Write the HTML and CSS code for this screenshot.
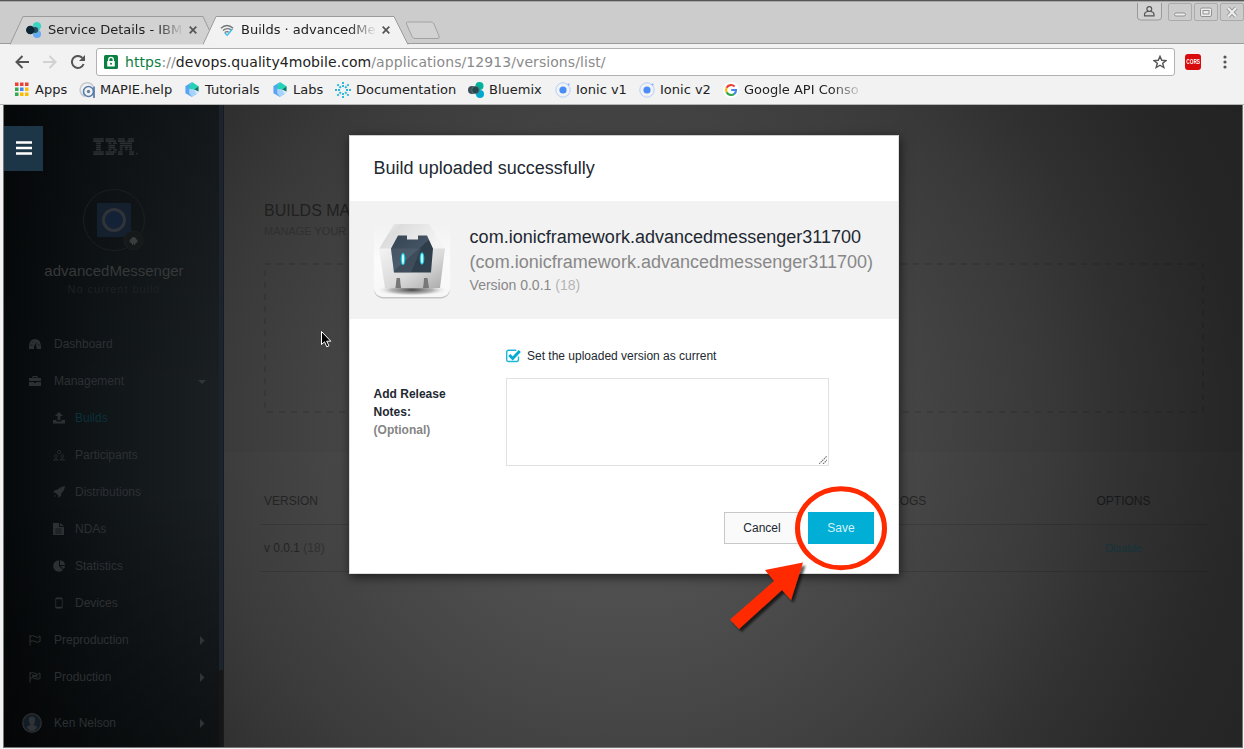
FILE: index.html
```html
<!DOCTYPE html>
<html lang="en">
<head>
<meta charset="utf-8">
<title>Builds · advancedMessenger</title>
<link rel="stylesheet" href="styles.css">
</head>
<body>
<svg width="0" height="0" class="defs">
  <defs>
    <symbol id="ionic" viewBox="0 0 16 16"><circle cx="8" cy="8" r="7.2" fill="none" stroke="#b3d0fb"/><circle cx="8" cy="8" r="3.6" fill="#4b8df8"/><circle cx="13.6" cy="2.6" r="1.1" fill="#8ab8fb"/></symbol>
    <symbol id="gem" viewBox="0 0 14 16"><path d="M7 8.500L14 10v2l-7 4z" fill="#d4e9fb"/><path d="M0 4.500L3 3 7 7v9l-7-4z" fill="#5ba3f5"/><path d="M4 7l5 1 3 5-5 3-3-4z" fill="#a5d3fb"/><path d="M7 0l7 4.500L9 8 3 7z" fill="#23d3b8"/><path d="M9 8l5-3.500V10z" fill="#087a68"/><path d="M7 0L3 7 0 4.500z" fill="#4ba9ea"/></symbol>
    <symbol id="caret" viewBox="0 0 5 9"><path d="M0 0l4.500 4.500L0 9z" fill="currentColor"/></symbol>
  </defs>
</svg>
<div class="browser">
  <header class="titlebar">
    <div class="tab tab-idle">
      <svg class="tab-shape" viewBox="0 0 207 29"><path d="M0 28.5L13 .5H193L206 28.5" fill="#d2d2d2" stroke="#9b9b9b"/></svg>
      <svg class="fav" viewBox="0 0 16 16"><circle cx="11" cy="4.2" r="4.2" fill="#36d9c0"/><circle cx="11" cy="12" r="4" fill="#65a8f8"/><circle cx="9.3" cy="8" r="3.600" fill="#1d5266" stroke="#75cbd9" stroke-width=".9"/><circle cx="4.3" cy="8" r="4.3" fill="#0d2636"/></svg>
      <span class="tab-text">Service Details - IBM</span>
      <svg class="tab-x" viewBox="0 0 8 8"><path d="M.7.7l6.6 6.6M7.3.7L.7 7.3"/></svg>
    </div>
    <div class="tab tab-active">
      <svg class="tab-shape" viewBox="0 0 207 29"><path d="M0 28.5L13 .5H191L205 28.5" fill="#f2f2f2" stroke="#9b9b9b"/><path d="M1 28.7H204" stroke="#f2f2f2"/></svg>
      <svg class="fav" viewBox="0 0 16 16"><g fill="none" stroke="#73777a" stroke-width="1.6"><path d="M1 6q7-6.500 14 0M3.300 8.600q4.700-4 9.400-.7M5.400 11q2.700-2 4.500-.5"/></g><path d="M5.500 11.500L8.200 14l6-7.200" fill="none" stroke="#40bdeb" stroke-width="1.7"/></svg>
      <span class="tab-text">Builds · advancedMe</span>
      <svg class="tab-x" viewBox="0 0 8 8"><path d="M.7.7l6.600 6.600M7.300.7L.7 7.300"/></svg>
    </div>
    <svg class="new-tab" viewBox="0 0 36 19"><path d="M2.500 1H26q2 0 3 2l5 12q1 2.500-1 2.500H10q-2 0-3-2L1.500 3Q1 1 2.500 1z" fill="#d2d2d2" stroke="#a2a2a2"/></svg>
    <div class="win-controls">
      <svg class="user-btn" viewBox="0 0 25 18"><path d="M.5 0V14q0 3 3 3h18q3 0 3-3V0" fill="#d2d2d2" stroke="#999"/><path d="M7.500 12.800V11.500q0-2.500 3-3h3.500q3 .5 3 3v1.300z" fill="none" stroke="#555" stroke-width="1.200"/><circle cx="12.300" cy="6" r="2.400" fill="#d8d8d8" stroke="#555" stroke-width="1.200"/></svg>
      <svg class="win-btn" viewBox="0 0 24 18"><rect x=".5" y=".5" width="23" height="17" rx="1.500"/><rect x="6.500" y="10" width="11" height="3" rx="1.500" class="glyph"/></svg>
      <svg class="win-btn" viewBox="0 0 24 18"><rect x=".5" y=".5" width="23" height="17" rx="1.500"/><rect x="6.500" y="5" width="11" height="8.500" rx="1.500" class="glyph"/><rect x="9" y="7.500" width="6" height="3.500" class="glyph"/></svg>
      <svg class="win-btn" viewBox="0 0 24 18"><rect x=".5" y=".5" width="23" height="17" rx="1.500"/><path d="M8 5l8 8.500M16 5l-8 8.500" stroke="#919191" stroke-width="4"/><path d="M8 5l8 8.500M16 5l-8 8.500" stroke="#eee" stroke-width="2.200"/></svg>
    </div>
  </header>
  <div class="toolbar">
    <svg class="nav-icon" viewBox="0 0 14 14"><path d="M14 7H1.500M7.500 1L1.500 7l6 6" stroke="#555"/></svg>
    <svg class="nav-icon" viewBox="0 0 14 14"><path d="M0 7h12.500M6.500 1l6 6-6 6" stroke="#d2d2d2"/></svg>
    <svg class="nav-icon" viewBox="0 0 14 14"><path d="M12.600 9A6 6 0 1 1 11.400 2.900" stroke="#555"/><path d="M14 0v6H8z" fill="#555" stroke="none"/></svg>
    <div class="omnibox">
      <svg class="lock" viewBox="0 0 14 14"><rect width="14" height="14" rx="1.500" fill="#0b8043"/><rect x="3.200" y="6" width="7.600" height="5.500" rx=".6" fill="#fff"/><path d="M4.700 6V4.700a2.300 2.300 0 0 1 4.600 0V6" fill="none" stroke="#fff" stroke-width="1.300"/><circle cx="7" cy="8.700" r="1" fill="#0b8043"/></svg>
      <span class="url"><span class="secure">https</span>://<span class="host">devops.quality4mobile.com</span>/applications/12913/versions/list/</span>
      <svg class="star" viewBox="0 0 14 14"><path d="M7 1.300l1.700 4 4.300.3-3.300 2.700 1.100 4.200L7 10.200l-3.800 2.300 1.100-4.200L1 5.600l4.300-.3z"/></svg>
    </div>
    <span class="cors"><b>CORS</b></span>
    <svg class="dots" viewBox="0 0 4 14"><circle cx="2" cy="2" r="1.600"/><circle cx="2" cy="7" r="1.600"/><circle cx="2" cy="12" r="1.600"/></svg>
  </div>
  <nav class="bookmarks">
    <a><svg class="bm" viewBox="0 0 14 14"><path fill="#ea4335" d="M0 0h3.500v3.500H0zM5 0h3.500v3.500H5zM10 0h3.500v3.500H10z"/><path fill="#34a853" d="M0 5h3.500v3.500H0zM0 10h3.500v3.500H0z"/><path fill="#4285f4" d="M5 5h3.500v3.500H5z"/><path fill="#fbbc05" d="M10 5h3.500v3.500H10zM5 10h3.500v3.500H5zM10 10h3.500v3.500H10z"/></svg>Apps</a>
    <a><svg class="bm wide" viewBox="0 0 16 16"><path d="M6 14.500A7 7 0 1 1 14 4" fill="none" stroke="#c5c9ce" stroke-width="1.500"/><circle cx="9.500" cy="9.500" r="5" fill="#f2f2f2" stroke="#567aaa" stroke-width="1.600"/><path d="M15 4.500V16" stroke="#567aaa" stroke-width="1.700"/><circle cx="9.500" cy="9.500" r="1.700" fill="#67849e"/></svg>MAPIE.help</a>
    <a><svg class="bm"><use href="#gem"/></svg>Tutorials</a>
    <a><svg class="bm"><use href="#gem"/></svg>Labs</a>
    <a><svg class="bm wide" viewBox="0 0 16 16"><g fill="none" stroke="#28b4dc" stroke-width="1.900" stroke-dasharray="2 1"><path d="M8 5V0M8 11v5M5 8H0M11 8h5M5.900 5.900L2.300 2.300M10.100 10.100l3.600 3.600M5.900 10.100l-3.600 3.600M10.100 5.900l3.600-3.600"/></g></svg>Documentation</a>
    <a><svg class="bm wide" viewBox="0 0 16 16"><circle cx="11.500" cy="4" r="4" fill="#00b39b"/><circle cx="12" cy="12" r="4" fill="#00a9ce"/><circle cx="4" cy="8" r="4" fill="#3e4f58"/><circle cx="7.500" cy="8" r="3.800" fill="#24494f" stroke="#5d8088" stroke-width=".8"/></svg>Bluemix</a>
    <a><svg class="bm wide"><use href="#ionic"/></svg>Ionic v1</a>
    <a><svg class="bm wide"><use href="#ionic"/></svg>Ionic v2</a>
    <a class="fade"><svg class="bm wide" viewBox="0 0 16 16"><circle cx="8" cy="8" r="8" fill="#fff"/><g fill="none" stroke-width="2.200"><path d="M11.600 4.500A5 5 0 0 0 3.600 5.700" stroke="#ea4335"/><path d="M3.600 5.700a5 5 0 0 0 0 4.600" stroke="#fbbc05"/><path d="M3.600 10.300a5 5 0 0 0 7.700 1.500" stroke="#34a853"/><path d="M11.300 11.800A5 5 0 0 0 13 8H8.200" stroke="#4285f4"/></g></svg>Google API Conso</a>
  </nav>
  <div class="page">
    <aside class="sidebar">
      <div class="brand">
        <svg class="ibm" viewBox="0 0 48 18" fill="none" stroke="#2c2f31"><path stroke-width="1.700" d="M0 1h11M0 3.300h11M3 5.600h5M3 7.900h5M3 10.200h5M3 12.500h5M0 14.800h11M0 17.100h11M13 1h9M13 3.300h11M16 5.600h3M21 5.600h4M16 7.900h7M16 10.200h7M16 12.500h3M21 12.500h4M13 14.800h11M13 17.100h9M26 1h7M37 1h6M26 3.300h8M36 3.300h7M28 5.600h13M28 7.900h13M28 10.200h3M33 10.200h4M38 10.200h3M28 12.500h3M34 12.500h2M38 12.500h3M26 14.800h5M38 14.800h5M26 17.100h5M38 17.100h5M45.500 16.500h1.500"/></svg>
      </div>
      <div class="app">
        <svg class="app-logo" viewBox="0 0 62 62"><circle cx="31" cy="31" r="30.500" fill="none" stroke="#1b1f22"/><rect x="14" y="14" width="34" height="34" rx="1" fill="#14202d"/><circle cx="31" cy="31" r="10.500" fill="#132236" stroke="#303438" stroke-width="3"/><circle cx="50.500" cy="51.500" r="9.500" fill="#16191a" stroke="#1c1d1e"/><path d="M48 50.500a2.600 2.600 0 0 1 5.200 0h1.300v3h-1.300v1h-1V56h-1.200v-1.500h-.8V56H49v-1.500h-1v-1h-1.300v-3z" fill="#3b3c3c"/></svg>
        <div class="app-name">advancedMessenger</div>
        <div class="app-build">No current build</div>
      </div>
      <ul class="menu">
        <li><svg viewBox="0 0 12 12"><path d="M0 11Q-.5 1 6 1t6 10H8L7 8l1-4-3 4v3z"/><path d="M1.500 7h2M3 3.500l1.300 1.300M9 7h1.700" stroke="#101619"/></svg><span>Dashboard</span></li>
        <li><svg viewBox="0 0 12 12"><path d="M3.500 3V1h5v2H12v3H0V3zM4.700 3h2.600V2H4.700zM0 7h5v1h2V7h5v4H0z"/></svg><span>Management</span><i class="down"></i></li>
        <li class="sub on"><svg viewBox="0 0 12 12"><path d="M6 0l4 4H7.300v4H4.700V4H2zM0 8h3.500v1.500h5V8H12v3.500H0z"/></svg><span>Builds</span></li>
        <li class="sub"><svg viewBox="0 0 12 12" class="line thin"><circle cx="6" cy="3" r="1.700"/><circle cx="2.800" cy="7" r="1.500"/><circle cx="9.200" cy="7" r="1.500"/><path d="M.3 11q2.500-3 5 0zM6.700 11q2.500-3 5 0z"/></svg><span>Participants</span></li>
        <li class="sub"><svg viewBox="0 0 12 12"><path d="M12 0Q7 .5 5 3.500L2 4 0 6.500l2.500.3L5.200 9.500l.3 2.500L8 10l.5-3Q11.500 5 12 0zM2 9l-1 2 2-1z"/></svg><span>Distributions</span></li>
        <li class="sub"><svg viewBox="0 0 12 12"><path d="M0 0h6v4h5v8H0zM7 0l4 3H7z"/><path d="M2.500 6h6M2.500 8h6M2.500 10h6" stroke="#111719"/></svg><span>NDAs</span></li>
        <li class="sub"><svg viewBox="0 0 12 12"><path d="M6 6l4 4A5.700 5.700 0 1 1 6 .3zM7 .3A5.500 5.500 0 0 1 12 5H7zM7.500 6H12q0 2-1.500 3z"/></svg><span>Statistics</span></li>
        <li class="sub"><svg viewBox="0 0 12 12" class="line"><rect x="2.700" y="1" width="6.600" height="10" rx=".5" stroke-width=".8"/><path d="M3 1.500h6M3 10.500h6" stroke-width="1.500"/></svg><span>Devices</span></li>
        <li><svg viewBox="0 0 12 12" class="line"><path d="M1 1v10.500M1 2.500q2.500-2 5 0t5-.5V7.500q-2.500 1.500-5 0t-5 0"/></svg><span>Preproduction</span><svg class="caret"><use href="#caret"/></svg></li>
        <li><svg viewBox="0 0 12 12" class="line"><path d="M1 1v10.500M1 2.500q2.500-2 5 0t5-.5V7.500q-2.500 1.500-5 0t-5 0M3 4l3 1 3-1.500M3 6l3-1 3 1.500"/></svg><span>Production</span><svg class="caret"><use href="#caret"/></svg></li>
        <li class="user"><svg class="avatar" viewBox="0 0 20 20"><circle cx="10" cy="10" r="9.200" fill="#121c26" stroke="#2a2c2d" stroke-width="1.500"/><path d="M10 3.500q3.500 0 3.200 4-.2 2.500-1.500 3.500 0 1.500 3.500 2.500-1.700 4.500-5.200 4.500t-5.200-4.500q3.500-1 3.500-2.500-1.300-1-1.500-3.500-.3-4 3.200-4z" fill="#303335"/></svg><span>Ken Nelson</span><svg class="caret"><use href="#caret"/></svg></li>
      </ul>
      <div class="scrollbar"></div>
    </aside>
    <button class="menu-toggle"><svg viewBox="0 0 16 14"><path d="M0 1.500h16M0 7h16M0 12.500h16" stroke="#fff" stroke-width="2.600"/></svg></button>
    <main class="main">
      <section class="upload">
        <h1>BUILDS MANAGEMENT</h1>
        <p>MANAGE YOUR BUILDS</p>
        <svg class="drop" viewBox="0 0 940 150"><rect x="1" y="1" width="938" height="148"/></svg>
      </section>
      <section class="versions">
        <div class="row head"><span>VERSION</span><span class="logs">LOGS</span><span class="opt">OPTIONS</span></div>
        <div class="row"><span>v 0.0.1 <em>(18)</em></span><span></span><span class="opt link">Disable</span></div>
      </section>
    </main>
    <div class="modal">
      <h2>Build uploaded successfully</h2>
      <div class="summary">
        <svg class="robot" viewBox="0 0 78 78">
          <defs>
            <linearGradient id="tile" x2="0" y2="1"><stop offset="0" stop-color="#f1f1f1"/><stop offset=".5" stop-color="#fbfbfb"/><stop offset="1" stop-color="#f7f7f7"/></linearGradient>
            <linearGradient id="face" x2="1" y2="1"><stop offset="0" stop-color="#f4f4f4"/><stop offset=".55" stop-color="#dadada"/><stop offset="1" stop-color="#a9a9a9"/></linearGradient>
            <linearGradient id="roof" x2="1" y2=".4"><stop offset="0" stop-color="#fafafa"/><stop offset=".3" stop-color="#dcdcdc"/><stop offset="1" stop-color="#f4f4f4"/></linearGradient>
            <radialGradient id="floor"><stop offset="0" stop-color="#444"/><stop offset=".6" stop-color="#999" stop-opacity=".7"/><stop offset="1" stop-color="#eee" stop-opacity="0"/></radialGradient>
            <linearGradient id="visor" x2="1" y2="1"><stop offset="0" stop-color="#364452"/><stop offset=".5" stop-color="#435363"/><stop offset=".52" stop-color="#2f3d4a"/><stop offset="1" stop-color="#334250"/></linearGradient>
          </defs>
          <rect x="1" y="1.500" width="76" height="76" rx="9" fill="#c5c5c5"/>
          <rect x=".8" y="0" width="76.400" height="76" rx="9" fill="url(#tile)"/>
          <ellipse cx="39" cy="69" rx="35" ry="6" fill="url(#floor)"/>
          <path d="M21 3H56L72 28H6z" fill="url(#roof)"/>
          <path d="M6 27.500H72L67 67H55L53.500 57H51L50 67H28L27 57H23.500L22.500 67H12z" fill="url(#face)"/>
          <path d="M23.500 57H27l1 10h-5.500zM51 57h3.500L56 67h-6z" fill="#777"/>
          <path d="M25 14.500h9v4h11v-4h9l6 13-2 24H21L18 27.500z" fill="url(#visor)"/>
          <path d="M18 27.500h30L38 51.500H21z" fill="#637181" opacity=".3"/>
          <ellipse cx="30" cy="38" rx="2.300" ry="6.200" fill="#17c6e4"/><ellipse cx="30" cy="38" rx="1.100" ry="5" fill="#c8fbff"/>
          <ellipse cx="49" cy="37.500" rx="2.300" ry="6.200" fill="#17c6e4"/><ellipse cx="49" cy="37.500" rx="1.100" ry="5" fill="#c8fbff"/>
        </svg>
        <div class="info">
          <div class="name">com.ionicframework.advancedmessenger311700</div>
          <div class="bundle">(com.ionicframework.advancedmessenger311700)</div>
          <div class="ver">Version 0.0.1 <span>(18)</span></div>
        </div>
      </div>
      <div class="form">
        <label class="check"><svg viewBox="0 0 16 14"><path d="M12.500 7.500V10.500q0 2-2 2H2.700q-2 0-2-2V3.200q0-2 2-2h7.600" fill="none" stroke="#20b6d8" stroke-width="1.400"/><path d="M3.300 6l3.400 3.500L13.800 2" fill="none" stroke="#00abd4" stroke-width="2.900"/></svg>Set the uploaded version as current</label>
        <div class="notes-label">Add Release Notes:<br><span>(Optional)</span></div>
        <div class="notes"><svg viewBox="0 0 8 8"><path d="M0 8l8-8M4 8l4-4" stroke="#777" stroke-width="1.100" stroke-dasharray="1.600 .7"/></svg></div>
      </div>
      <div class="actions"><button class="cancel">Cancel</button><button class="save">Save</button></div>
    </div>
  </div>
</div>
<svg class="annotation" viewBox="0 0 170 160">
  <defs><filter id="soft" x="-20%" y="-20%" width="150%" height="150%"><feDropShadow dx="2.500" dy="3" stdDeviation="1.300" flood-color="#000" flood-opacity=".65"/></filter></defs>
  <ellipse cx="121" cy="48.300" rx="43.500" ry="39.500" fill="none" stroke="#ff2a00" stroke-width="5"/>
  <path d="M83 82.500L45 90l9 11L10 139.500l9 9.500 43-39 9 10z" fill="#ff2a00" filter="url(#soft)"/>
</svg>
<svg class="pointer" viewBox="0 0 11 17"><path d="M.5.5V13.500l3-2.700 2.300 5 2.200-1-2.300-4.600H9.800z" fill="#000" stroke="#fff"/></svg>
</body>
</html>
```
FILE: styles.css
```css
* { box-sizing: border-box; }
body { margin: 0; width: 1244px; height: 749px; overflow: hidden; position: relative; font: 12px/18px "Liberation Sans", Arial, sans-serif; }
svg { display: block; flex: none; }
.defs { position: absolute; }
.browser { display: flex; flex-direction: column; height: 749px; background: #f2f2f2; border-top: 1px solid #555; font-family: "DejaVu Sans", sans-serif; }

.titlebar { height: 43px; display: flex; align-items: flex-end; background: #ccc; border-top: 1px solid #a8a8a8; border-bottom: 1px solid #9b9b9b; padding-left: 10px; }
.tab { position: relative; width: 207px; height: 28px; margin-bottom: -1px; display: flex; align-items: center; padding-left: 16px; font-size: 13px; color: #222; }
.tab-active { margin-left: -14px; padding-left: 17px; z-index: 1; }
.tab-shape { position: absolute; left: 0; top: 0; width: 207px; height: 29px; }
.fav { position: relative; width: 16px; height: 16px; margin-right: 6px; }
.tab-active .fav { width: 14px; margin-right: 7px; }
.tab-text { position: relative; width: 134px; margin-right: 7px; white-space: nowrap; -webkit-mask-image: linear-gradient(90deg, #000 108px, rgba(0,0,0,.1) 133px); mask-image: linear-gradient(90deg, #000 108px, rgba(0,0,0,.1) 133px); }
.tab-x { position: relative; width: 8px; height: 8px; fill: none; stroke: #555; stroke-width: 1.7; }
.new-tab { width: 36px; height: 19px; margin: 0 0 3px -5px; }
.win-controls { display: flex; align-self: flex-start; margin: 1px 0 0 auto; }
.user-btn { width: 25px; height: 18px; margin-right: 6px; }
.win-btn { width: 24px; height: 18px; margin-right: 2px; fill: none; stroke: #aaa; }
.win-btn:last-child { margin-right: 0; }
.win-btn .glyph { fill: #ededed; stroke: #919191; }

.toolbar { height: 34px; display: flex; align-items: center; padding: 2px 17px 0 15px; }
.nav-icon { width: 14px; height: 14px; margin-right: 14px; fill: none; stroke-width: 2; }
.nav-icon:nth-child(3) { margin-right: 11px; }
.omnibox { width: 1079px; height: 28px; display: flex; align-items: center; padding: 0 7px; background: #fff; border: 1px solid #b1b1b1; border-radius: 3px; }
.lock { width: 14px; height: 14px; margin-right: 7px; }
.url { flex: 1; font-size: 14px; letter-spacing: .075px; color: #8a8a8a; white-space: nowrap; }
.secure { color: #0b8043; }
.host { color: #222; }
.star { width: 14px; height: 14px; fill: none; stroke: #555; stroke-width: 1.4; }
.cors { width: 16px; height: 16px; margin-left: 10px; border-radius: 3px; background: #d80c0c; color: #fff; display: flex; align-items: center; justify-content: center; font: 7px/16px "Liberation Sans", sans-serif; }
.cors b { transform: scaleX(.68); }
.dots { width: 4px; height: 14px; margin-left: 22px; fill: #555; }

.bookmarks { height: 27px; display: grid; grid-template-columns: 64px 106px 88px 62px 133px 87px 84px 84px 140px; align-items: center; padding: 0 0 3px 15px; font-size: 13px; color: #222; border-bottom: 1px solid #b5b5b5; }
.bookmarks a { display: flex; align-items: center; white-space: nowrap; }
.bm { width: 14px; height: 15px; margin-right: 6px; }
.bm.wide { width: 16px; height: 16px; margin-right: 5px; }
.fade { -webkit-mask-image: linear-gradient(90deg, #000 108px, transparent 141px); mask-image: linear-gradient(90deg, #000 108px, transparent 141px); }

.page { position: relative; flex: 1; display: flex; margin: 0 1px 1px 3px; border: 1px solid #767676; border-width: 0 1px 1px 1px; font-family: "Liberation Sans", Arial, sans-serif; overflow: hidden; background: #2a2a2a; }
.sidebar { position: relative; flex: none; width: 220px; color: #2c3033; background: linear-gradient(90deg, #06090b, #101518 45%, #1b2023); }
.sidebar::before { content: ""; position: absolute; inset: 0; background: linear-gradient(180deg, rgba(0,0,0,.25), transparent 45%, transparent 60%, rgba(0,0,0,.45)); }
.sidebar > * { position: relative; }
.brand { padding: 33px 0 0 88px; }
.ibm { width: 48px; height: 17px; }
.app { display: flex; flex-direction: column; align-items: center; padding-top: 34px; }
.app-logo { width: 62px; height: 62px; }
.app-name { margin-top: 10px; font-size: 15px; line-height: 20px; color: #363839; }
.app-build { letter-spacing: .95px; line-height: 16px; font-size: 11px; color: #1d2123; }
.menu { list-style: none; margin: 0; padding: 28px 20px 0 23px; }
.menu li { height: 37px; display: flex; align-items: center; gap: 13px; padding-left: 2px; }
.menu li > svg { width: 12px; height: 12px; fill: currentColor; }
.menu li > svg.line { fill: none; stroke: currentColor; }
.menu li > svg.thin { stroke-width: .7; }
.menu .sub { padding-left: 26px; gap: 10px; }
.menu .on span { color: #0b3138; }
.menu .down { margin: 2px -2px 0 auto; border: 4px solid transparent; border-top-color: #303437; border-bottom: 0; }
.menu li > svg.caret { width: 5px; height: 9px; margin: 2px -1px 0 auto; color: #303437; }
.menu .user { margin: 9px 0 0 -5px; gap: 12px; padding-left: 0; }
.menu li > svg.avatar { width: 20px; height: 20px; }
.scrollbar { position: absolute; right: 0; top: 0; width: 5px; height: 642px; background: linear-gradient(#1b242d 565px, #161616 565px); border-right: 1px solid #181b1d; }
.menu-toggle { position: absolute; left: 0; top: 21px; width: 39px; height: 45px; padding: 0 0 2px 12px; border: 0; background: #1c3648; }
.menu-toggle svg { width: 16px; height: 14px; }

.main { flex: 1; min-width: 0; display: flex; flex-direction: column; background: radial-gradient(circle at 400px 322px, #555 0, #4d4d4d 175px, #454545 280px, #393939 420px, #303030 500px, #262626 610px, #222 720px); }
.upload { height: 347px; padding: 95px 37px 0 40px; }
.upload h1 { margin: 0; font-size: 16px; font-weight: 400; line-height: 22px; color: #202020; }
.upload p { margin: 0; font-size: 11px; line-height: 19px; color: #303030; }
.drop { width: 940px; height: 150px; margin-top: 22px; fill: none; stroke: rgba(0,0,0,.1); stroke-width: 2; stroke-dasharray: 6 6; }
.versions { flex: 1; padding: 26px 35px 0 36px; background: rgba(255,255,255,.012); }
.row { height: 47px; display: grid; grid-template-columns: 594px 182px 1fr; align-items: center; padding-left: 4px; border-bottom: 1px solid rgba(0,0,0,.13); color: #242424; }
.row em { font-style: normal; color: #303030; }
.logs { padding-left: 35px; }
.opt { text-align: center; color: #181818; }
.opt.link { font-size: 11px; color: #13343b; }

.modal { position: absolute; left: 345px; top: 30px; width: 550px; height: 439px; background: #fff; color: #222831; border: 1px solid #ddd; border-top-color: #ccc; box-shadow: 1px 3px 10px rgba(0,0,0,.6); }
.modal h2 { height: 65px; margin: 0; padding-left: 23.6px; font-size: 18px; font-weight: 400; line-height: 65px; }
.summary { height: 118px; background: #f2f2f2; display: flex; padding: 20px 0 0 23px; }
.robot { width: 78px; height: 78px; }
.info { padding: 4px 0 0 18.6px; white-space: nowrap; }
.name, .bundle { font-size: 18px; line-height: 25px; letter-spacing: .015px; }
.bundle { color: #888; }
.ver { font-size: 14px; line-height: 20px; color: #888; }
.ver span { color: #b5b5b5; }
.form { display: grid; grid-template-columns: 132.4px 323px; grid-template-rows: 31px 88px; padding: 28px 0 0 23.6px; }
.check { grid-column: 2; display: flex; height: 18px; align-items: center; gap: 5px; }
.check svg { width: 16px; height: 14px; }
.notes-label { padding: 7px 40px 0 0; font-weight: 700; }
.notes-label span { color: #858585; }
.notes { border: 1px solid #e2e2e2; display: flex; justify-content: flex-end; align-items: flex-end; padding: 1px; }
.notes svg { width: 8px; height: 8px; }
.actions { display: flex; justify-content: flex-end; gap: 8px; padding: 46px 24px 0 0; }
.actions button { height: 32px; padding: 0; font: 12px "Liberation Sans", Arial, sans-serif; }
.cancel { width: 76px; background: #fafafa; border: 1px solid #c8c8c8; color: #222831; }
.save { width: 66px; background: #00aed6; border: 0; color: #d5f3fa; }

.annotation { position: absolute; left: 720px; top: 480px; width: 170px; height: 160px; }
.pointer { position: absolute; left: 321px; top: 331px; width: 11px; height: 17px; }
```
